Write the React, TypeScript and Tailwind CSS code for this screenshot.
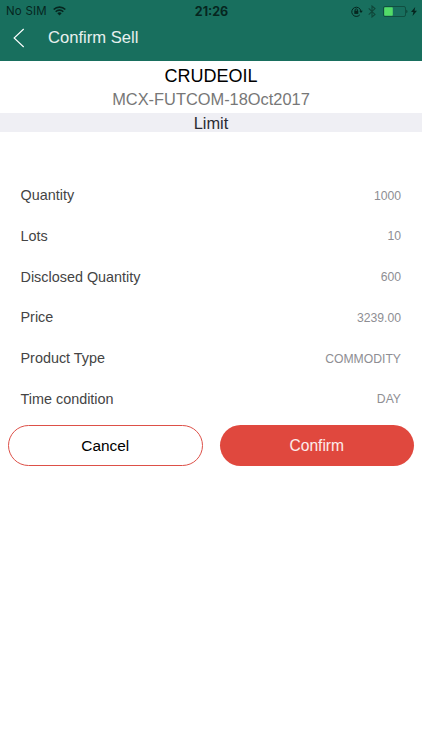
import React from "react";

const details = [
  { label: "Quantity", value: "1000" },
  { label: "Lots", value: "10" },
  { label: "Disclosed Quantity", value: "600" },
  { label: "Price", value: "3239.00" },
  { label: "Product Type", value: "COMMODITY" },
  { label: "Time condition", value: "DAY" },
];

const WifiIcon = () => (
  <svg width="13" height="10" viewBox="0 0 13 10" fill="none" stroke="#06261f">
    <path d="M.7 3.5a8.2 8.2 0 0 1 11.6 0" strokeWidth="1.7" />
    <path d="M2.7 5.7a5.4 5.4 0 0 1 7.6 0" strokeWidth="1.6" />
    <path d="M4.3 7.3a3.1 3.1 0 0 1 4.4 0L6.5 9.6z" fill="#06261f" stroke="none" />
  </svg>
);

const RotationLockIcon = () => (
  <svg width="12" height="11" viewBox="0 0 12 11" fill="none" stroke="#06261f">
    <path d="M8.8 8.9A4.6 4.6 0 1 1 9.9 5" strokeWidth="1" />
    <path d="M8.2 4.8h3.6L10 7z" fill="#06261f" stroke="none" />
    <rect x="3.3" y="4.7" width="4" height="3.2" fill="#06261f" stroke="none" />
    <path d="M4.1 5V4a1.2 1.2 0 0 1 2.4 0v1" strokeWidth=".9" />
  </svg>
);

const BluetoothIcon = () => (
  <svg width="8" height="13" viewBox="0 0 8 13" fill="none" stroke="#0f4639" strokeWidth="1.1">
    <path d="M.7 3.4l6.3 6L4 12V1l3 2.6-6.3 6" />
  </svg>
);

const BatteryIcon = () => (
  <svg width="25" height="11" viewBox="0 0 25 11" fill="none">
    <rect x=".5" y=".5" width="22" height="10" rx="1.5" stroke="#104f41" />
    <rect x="1.2" y="1.2" width="8.6" height="8.6" rx=".7" fill="#53dc68" />
    <path d="M23.4 3.8c1.4.4 1.4 3 0 3.4z" fill="#0b3b30" />
  </svg>
);

const BoltIcon = () => (
  <svg width="6" height="9" viewBox="0 0 6 9" fill="#06261f">
    <path d="M4.2 0L0 5h2.4L1.5 9 6 3.8H3.5z" />
  </svg>
);

function StatusBar() {
  return (
    <div className="grid h-[22px] grid-cols-[1fr_auto_1fr] items-center pl-[6px] pr-[5px] text-[#06261f]">
      <div className="flex items-center gap-[6px]">
        <span className="pt-px text-[11.5px] leading-none tracking-[0.2px]">No SIM</span>
        <WifiIcon />
      </div>
      <span className="pt-[2px] text-[12.5px] leading-none font-bold">21:26</span>
      <div className="flex items-center justify-end">
        <RotationLockIcon />
        <span className="ml-[5px]">
          <BluetoothIcon />
        </span>
        <span className="ml-[7px]">
          <BatteryIcon />
        </span>
        <span className="ml-[3px]">
          <BoltIcon />
        </span>
      </div>
    </div>
  );
}

function Header() {
  return (
    <header className="h-[61px] bg-[#186f5e] font-['Inter',sans-serif]">
      <StatusBar />
      <div className="flex h-[32px] items-center pl-[13px] text-white">
        <svg width="12" height="20" viewBox="0 0 12 20" fill="none" stroke="currentColor" strokeWidth="1.1">
          <path d="M10.7 1L1.1 10l9.6 9" />
        </svg>
        <h1 className="ml-[23px] pt-px font-['Liberation_Sans',sans-serif] text-[16.6px] leading-none text-white/90">
          Confirm Sell
        </h1>
      </div>
    </header>
  );
}

export default function App() {
  return (
    <div className="h-[750px] w-[422px] overflow-hidden bg-white font-['Liberation_Sans',Arial,sans-serif]">
      <Header />
      <section className="text-center">
        <h2 className="h-[28px] text-[18px] leading-[30px] text-black">CRUDEOIL</h2>
        <p className="h-[24px] text-[16.4px] leading-[20px] text-[#777]">MCX-FUTCOM-18Oct2017</p>
        <p className="h-[19px] bg-[#efeff4] text-[16.4px] leading-[21px] text-[#2b2b33]">Limit</p>
      </section>
      <ul className="mt-[43.5px] pr-[21px] pl-[20.5px]">
        {details.map((row) => (
          <li key={row.label} className="flex h-[40.75px] items-center justify-between">
            <span className="text-[14.4px] text-[#444]">{row.label}</span>
            <span className="text-[12.2px] text-[#8e8e93]">{row.value}</span>
          </li>
        ))}
      </ul>
      <div className="mt-[4.5px] grid grid-cols-2 gap-[17px] px-[8px]">
        <button className="h-[41px] rounded-full border border-[#dd5048] pt-px text-[15.4px] text-black">Cancel</button>
        <button className="h-[41px] rounded-full bg-[#e0483e] pt-px text-[15.6px] text-white/90">Confirm</button>
      </div>
    </div>
  );
}
